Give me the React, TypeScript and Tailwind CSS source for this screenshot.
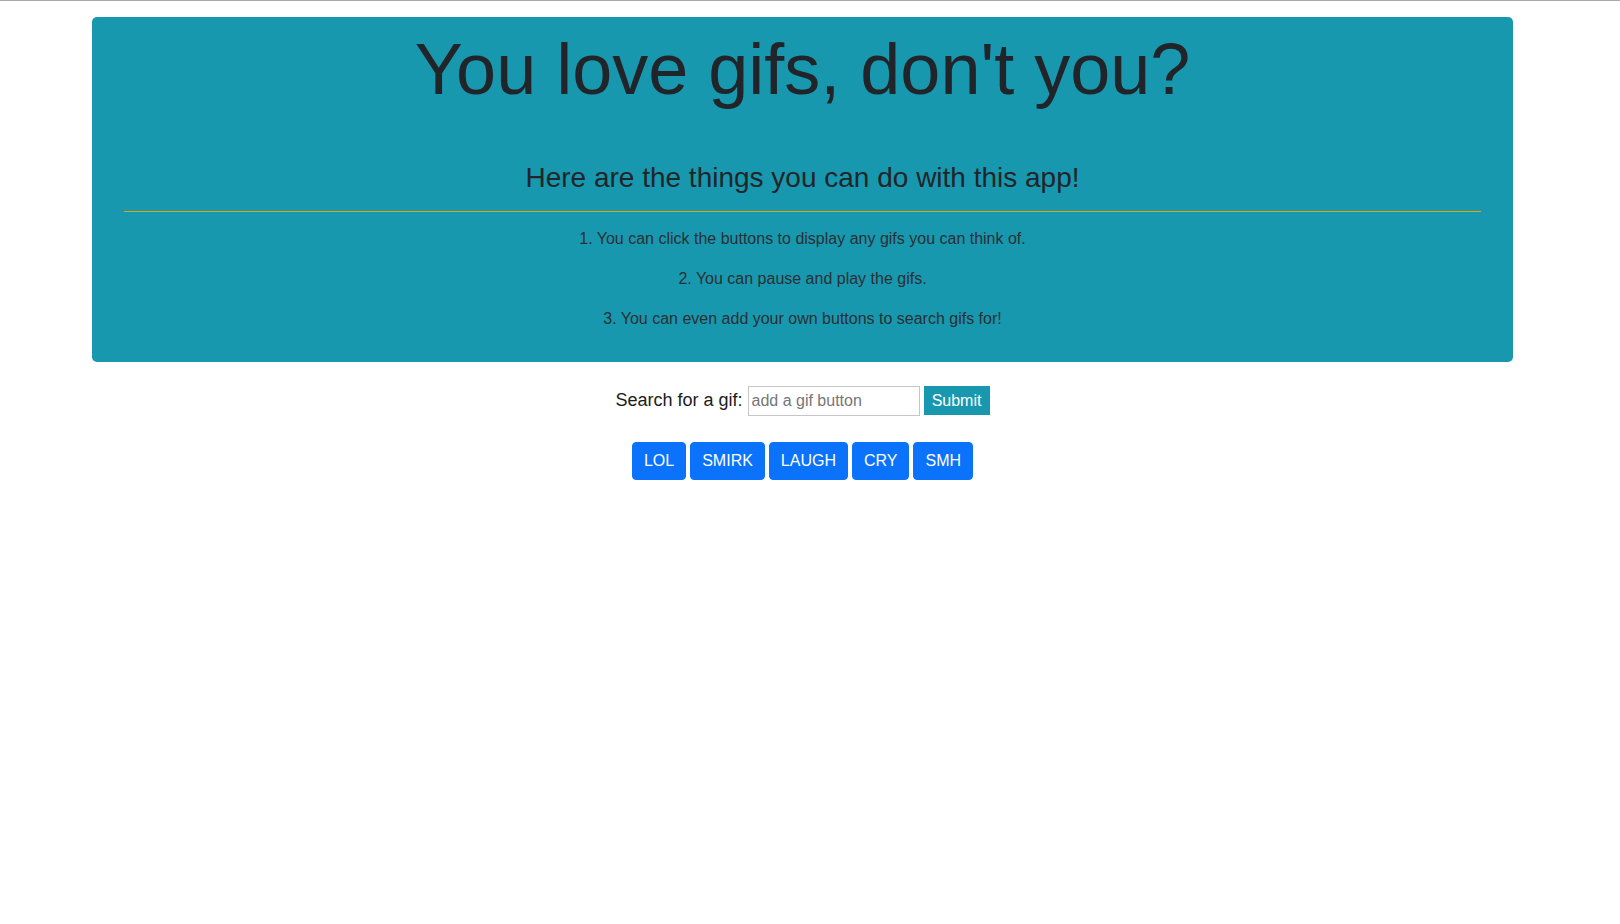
import { useState } from "react";

const topics = ["LOL", "SMIRK", "LAUGH", "CRY", "SMH"];

const App = () => {
  const [query, setQuery] = useState("");

  return (
    <div className="min-h-screen bg-white border-t border-[#a9a9a9] font-['Liberation_Sans',Arial,sans-serif] text-[#212529]">
      <div className="w-[1605px]">
        {/* Jumbotron */}
        <div className="ml-[92px] mt-4 w-[1421px] rounded-[5px] bg-[#1798af] pt-[9px] pb-[15px] text-center">
          <h1 className="text-[72px] leading-[1.2] font-light">You love gifs, don't you?</h1>
          <h3 className="mt-[49px] text-[28px] leading-[1.2]">Here are the things you can do with this app!</h3>
          <hr className="mx-8 mt-4 border-0 border-t border-[#e3a500]" />
          <div className="mt-[15px] text-base leading-6 text-[#2a2f33]">
            <p className="mb-4">1. You can click the buttons to display any gifs you can think of.</p>
            <p className="mb-4">2. You can pause and play the gifs.</p>
            <p className="mb-4">3. You can even add your own buttons to search gifs for!</p>
          </div>
        </div>

        {/* Search form */}
        <form
          className="mt-6 flex h-[30px] items-center justify-center"
          onSubmit={(e) => e.preventDefault()}
        >
          <label className="text-[18px] leading-[27px] text-[#1c1c1c]">Search for a gif:</label>
          <input
            value={query}
            onChange={(e) => setQuery(e.target.value)}
            placeholder="add a gif button"
            className="ml-[5px] h-[30px] w-[172px] border border-[#c6c6c6] pl-[3px] text-base text-[#333] placeholder:text-[#767676] outline-none"
          />
          <button type="submit" className="ml-1 h-[29px] w-[66px] bg-[#1798af] text-base text-white">
            Submit
          </button>
        </form>

        {/* Topic buttons */}
        <div className="mt-[26px] flex justify-center gap-1">
          {topics.map((t) => (
            <button
              key={t}
              className="h-[38px] rounded-[4px] border border-[#0a72fb] bg-[#0a72fb] px-[11px] text-base leading-6 text-white"
            >
              {t}
            </button>
          ))}
        </div>
      </div>
    </div>
  );
};

export default App;
